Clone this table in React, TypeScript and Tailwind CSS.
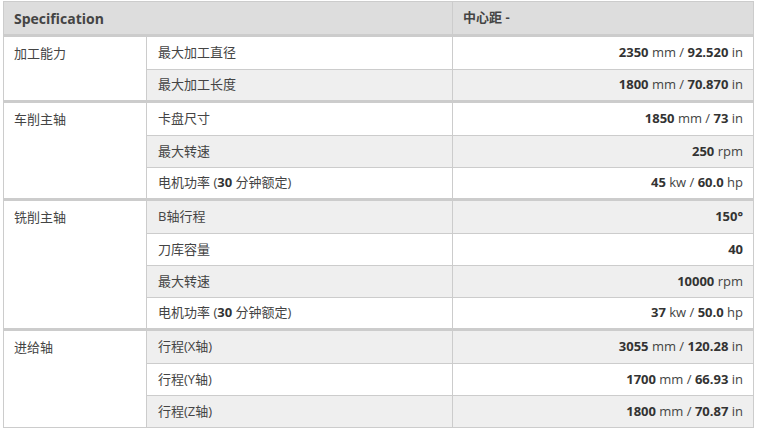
import React from 'react';

type Row = { label: React.ReactNode; value: React.ReactNode };
type Group = { name: string; rows: Row[] };

const B = ({ children }: { children: React.ReactNode }) => (
  <span className="font-bold text-[#333]">{children}</span>
);

const groups: Group[] = [
  {
    name: '加工能力',
    rows: [
      { label: '最大加工直径', value: <><B>2350</B> mm / <B>92.520</B> in</> },
      { label: '最大加工长度', value: <><B>1800</B> mm / <B>70.870</B> in</> },
    ],
  },
  {
    name: '车削主轴',
    rows: [
      { label: '卡盘尺寸', value: <><B>1850</B> mm / <B>73</B> in</> },
      { label: '最大转速', value: <><B>250</B> rpm</> },
      { label: <>电机功率 (<B>30</B> 分钟额定)</>, value: <><B>45</B> kw / <B>60.0</B> hp</> },
    ],
  },
  {
    name: '铣削主轴',
    rows: [
      { label: 'B轴行程', value: <B>150°</B> },
      { label: '刀库容量', value: <B>40</B> },
      { label: '最大转速', value: <><B>10000</B> rpm</> },
      { label: <>电机功率 (<B>30</B> 分钟额定)</>, value: <><B>37</B> kw / <B>50.0</B> hp</> },
    ],
  },
  {
    name: '进给轴',
    rows: [
      { label: '行程(X轴)', value: <><B>3055</B> mm / <B>120.28</B> in</> },
      { label: '行程(Y轴)', value: <><B>1700</B> mm / <B>66.93</B> in</> },
      { label: '行程(Z轴)', value: <><B>1800</B> mm / <B>70.87</B> in</> },
    ],
  },
];

export default function App() {
  let idx = 0;
  return (
    <div className="pl-[3px] pt-[1px] bg-white font-['Open_Sans','Noto_Sans_CJK_SC',sans-serif] text-[13px] text-[#444]">
      <table className="w-[750px] border-collapse border border-[#cccccc] table-fixed">
        <colgroup>
          <col className="w-[143px]" />
          <col className="w-[306px]" />
          <col className="w-[301px]" />
        </colgroup>
        <thead>
          <tr className="bg-[#dddddd] h-[34px] border-b-[3px] border-[#cccccc]">
            <th colSpan={2} className="text-left font-bold text-[14px] text-[#444] px-[10px] py-0">
              Specification
            </th>
            <th className="text-left font-bold text-[#444] px-[10px] py-0 border-l border-[#cccccc]">
              中心距 -
            </th>
          </tr>
        </thead>
        <tbody>
          {groups.map((g) =>
            g.rows.map((r, i) => {
              const gray = idx++ % 2 === 1;
              return (
                <tr
                  key={g.name + i}
                  className={`${i === 0 ? 'h-[34px] border-t-[3px]' : 'h-[32px] border-t'} border-[#cccccc]`}
                >
                  {i === 0 && (
                    <td
                      rowSpan={g.rows.length}
                      className="align-top bg-white px-[10px] pt-[7px] border-r border-[#cccccc]"
                    >
                      {g.name}
                    </td>
                  )}
                  <td className={`px-[11px] py-0 ${gray ? 'bg-[#efefef]' : 'bg-white'}`}>{r.label}</td>
                  <td
                    className={`px-[10px] py-0 text-right border-l border-[#cccccc] ${gray ? 'bg-[#efefef]' : 'bg-white'}`}
                  >
                    {r.value}
                  </td>
                </tr>
              );
            })
          )}
        </tbody>
      </table>
    </div>
  );
}
